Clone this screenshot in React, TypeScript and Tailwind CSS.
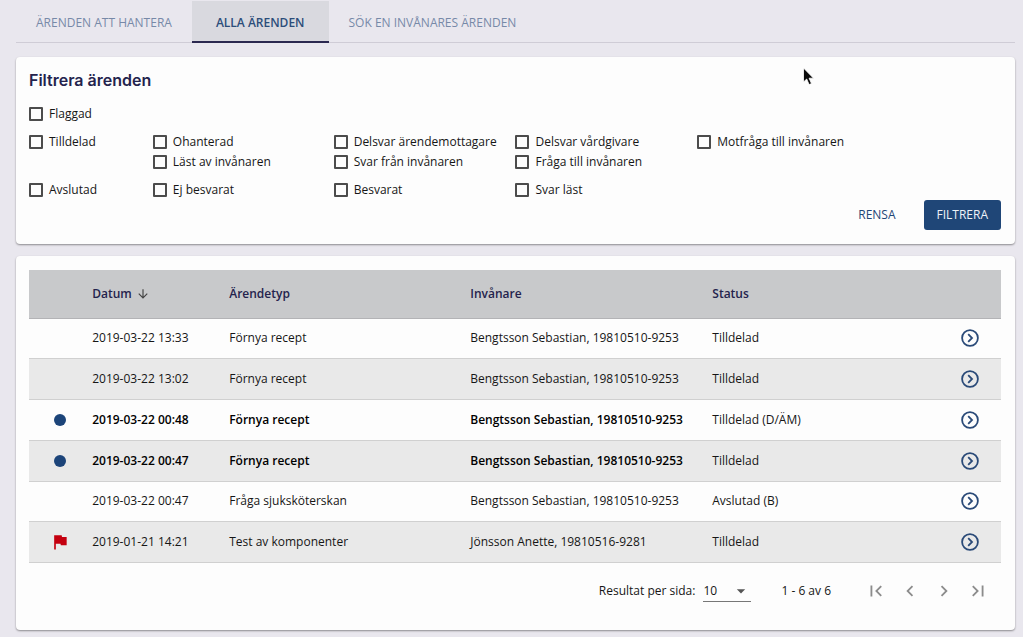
import React from "react";
import {
  MdArrowDownward,
  MdArrowDropDown,
  MdChevronLeft,
  MdChevronRight,
  MdFirstPage,
  MdFlag,
  MdLastPage,
} from "react-icons/md";

type Marker = "none" | "unread" | "flag";

interface Errand {
  marker: Marker;
  date: string;
  type: string;
  resident: string;
  status: string;
}

const errands: Errand[] = [
  { marker: "none", date: "2019-03-22 13:33", type: "Förnya recept", resident: "Bengtsson Sebastian, 19810510-9253", status: "Tilldelad" },
  { marker: "none", date: "2019-03-22 13:02", type: "Förnya recept", resident: "Bengtsson Sebastian, 19810510-9253", status: "Tilldelad" },
  { marker: "unread", date: "2019-03-22 00:48", type: "Förnya recept", resident: "Bengtsson Sebastian, 19810510-9253", status: "Tilldelad (D/ÄM)" },
  { marker: "unread", date: "2019-03-22 00:47", type: "Förnya recept", resident: "Bengtsson Sebastian, 19810510-9253", status: "Tilldelad" },
  { marker: "none", date: "2019-03-22 00:47", type: "Fråga sjuksköterskan", resident: "Bengtsson Sebastian, 19810510-9253", status: "Avslutad (B)" },
  { marker: "flag", date: "2019-01-21 14:21", type: "Test av komponenter", resident: "Jönsson Anette, 19810516-9281", status: "Tilldelad" },
];

function Check({ label }: { label: string }) {
  return (
    <label className="flex h-5 items-center gap-1.5 whitespace-nowrap">
      <input
        type="checkbox"
        className="size-3.5 shrink-0 appearance-none rounded-[1px] border-2 border-[#4c4c4c] bg-transparent checked:bg-[#1f4677]"
      />
      {label}
    </label>
  );
}

function FilterRow({ main, groups }: { main: string; groups: string[][] }) {
  return (
    <div className="grid grid-cols-[124fr_181fr_182fr_182fr_304fr]">
      <Check label={main} />
      {groups.map((group) => (
        <div key={group[0]}>
          {group.map((label) => (
            <Check key={label} label={label} />
          ))}
        </div>
      ))}
    </div>
  );
}

function OpenIcon() {
  return (
    <svg viewBox="0 0 18 18" className="size-[18px]" fill="none" stroke="#2a4a78" strokeWidth="1.8">
      <circle cx="9" cy="9" r="7.9" />
      <path d="M7.2 5.2 11 9l-3.8 3.8" />
    </svg>
  );
}

function MarkerIcon({ marker }: { marker: Marker }) {
  if (marker === "unread") {
    return <span role="img" aria-label="Oläst" className="block size-3 rounded-full bg-[#1c4479]" />;
  }
  if (marker === "flag") {
    return <MdFlag aria-label="Flaggad" className="size-5 text-[#c4000f]" />;
  }
  return null;
}

const pageButtons = [
  { label: "Första sidan", Icon: MdFirstPage },
  { label: "Föregående sida", Icon: MdChevronLeft },
  { label: "Nästa sida", Icon: MdChevronRight },
  { label: "Sista sidan", Icon: MdLastPage },
];

export default function App() {
  return (
    <div className="relative min-h-screen bg-[#e9e7ee] pt-px pr-2 pb-1.5 pl-4 font-['Open_Sans',sans-serif] text-xs font-medium text-[#161616]">
      <nav className="flex h-[42px] border-b border-[#cfccd6] text-[#7789a8]">
        <a href="#hantera" className="flex items-center px-5 pt-0.5">ÄRENDEN ATT HANTERA</a>
        <a
          href="#alla"
          aria-current="page"
          className="-mb-px flex items-center border-b-2 border-[#2b2850] bg-[#d9d9df] px-6 pt-[3px] font-semibold text-[#2c4d7a]"
        >
          ALLA ÄRENDEN
        </a>
        <a href="#sok" className="flex items-center px-5 pt-0.5">SÖK EN INVÅNARES ÄRENDEN</a>
      </nav>

      <form
        onSubmit={(event) => event.preventDefault()}
        className="mt-3.5 rounded bg-[#fdfdfd] pt-[11px] pr-3.5 pb-3.5 pl-[13px] shadow-[0_1px_2px_rgba(0,0,0,0.4)]"
      >
        <h2 className="font-['Inter',sans-serif] text-base leading-6 font-semibold text-[#24234d]">
          Filtrera ärenden
        </h2>
        <div className="mt-3 flex flex-col gap-2">
          <Check label="Flaggad" />
          <FilterRow
            main="Tilldelad"
            groups={[
              ["Ohanterad", "Läst av invånaren"],
              ["Delsvar ärendemottagare", "Svar från invånaren"],
              ["Delsvar vårdgivare", "Fråga till invånaren"],
              ["Motfråga till invånaren"],
            ]}
          />
          <FilterRow main="Avslutad" groups={[["Ej besvarat"], ["Besvarat"], ["Svar läst"]]} />
        </div>
        <div className="flex justify-end gap-3.5">
          <button type="reset" className="h-[30px] px-3.5 text-[#1f4677]">RENSA</button>
          <button type="submit" className="h-[30px] rounded-[3px] bg-[#1f4677] px-[13px] text-[#eef2f8]">
            FILTRERA
          </button>
        </div>
      </form>

      <section className="mt-3 rounded bg-[#fdfdfd] pt-3.5 pr-3.5 pb-7 pl-[13px] shadow-[0_1px_2px_rgba(0,0,0,0.4)]">
        <table className="h-[293px] w-full table-fixed border-collapse text-left">
          <colgroup>
            <col className="w-[6.5%]" />
            <col className="w-[14.1%]" />
            <col className="w-[24.8%]" />
            <col className="w-[24.9%]" />
            <col />
            <col className="w-[6.4%]" />
          </colgroup>
          <thead>
            <tr className="h-12 border-b border-[#b3b3b6] bg-[#c8c9cb] text-[#24234d]">
              <td />
              <th scope="col" className="font-semibold">
                <button type="button" className="flex items-center gap-1">
                  Datum
                  <MdArrowDownward className="size-3.5 text-[#444444]" />
                </button>
              </th>
              <th scope="col" className="font-semibold">Ärendetyp</th>
              <th scope="col" className="font-semibold">Invånare</th>
              <th scope="col" className="font-semibold">Status</th>
              <td />
            </tr>
          </thead>
          <tbody>
            {errands.map((errand) => {
              const weight = errand.marker === "unread" ? "font-semibold text-black" : "font-medium";
              return (
                <tr key={errand.date + errand.type} className="border-b border-[#d0d0d0] even:bg-[#e9e9e9]">
                  <td>
                    <div className="flex h-5 items-center justify-center pr-0.5">
                      <MarkerIcon marker={errand.marker} />
                    </div>
                  </td>
                  <td className={weight}>{errand.date}</td>
                  <td className={weight}>{errand.type}</td>
                  <td className={weight}>{errand.resident}</td>
                  <td>{errand.status}</td>
                  <td>
                    <button type="button" aria-label="Öppna ärende" className="mx-auto block">
                      <OpenIcon />
                    </button>
                  </td>
                </tr>
              );
            })}
          </tbody>
        </table>

        <div className="mt-[17px] flex items-center justify-end pr-3">
          <label htmlFor="page-size" className="mr-2">Resultat per sida:</label>
          <div className="relative mr-[30px] border-b border-[#777777]">
            <select id="page-size" className="block h-5 w-12 appearance-none bg-transparent">
              <option>10</option>
              <option>25</option>
              <option>50</option>
            </select>
            <MdArrowDropDown className="pointer-events-none absolute top-0 right-0 size-5 text-[#555555]" />
          </div>
          <span className="mr-[34px]">1 - 6 av 6</span>
          <div className="flex gap-3 text-[#8c8c8c]">
            {pageButtons.map(({ label, Icon }) => (
              <button key={label} type="button" aria-label={label}>
                <Icon className="size-[22px]" />
              </button>
            ))}
          </div>
        </div>
      </section>

      <svg viewBox="0 0 14 20" className="pointer-events-none absolute top-[67px] left-[802px] h-5 w-3.5">
        <path d="M1.5 1v14l3.2-3 2.4 5.6 2.4-1-2.4-5.4h4.4z" fill="#0a0a0a" stroke="#ffffff" strokeWidth="0.8" />
      </svg>
    </div>
  );
}
